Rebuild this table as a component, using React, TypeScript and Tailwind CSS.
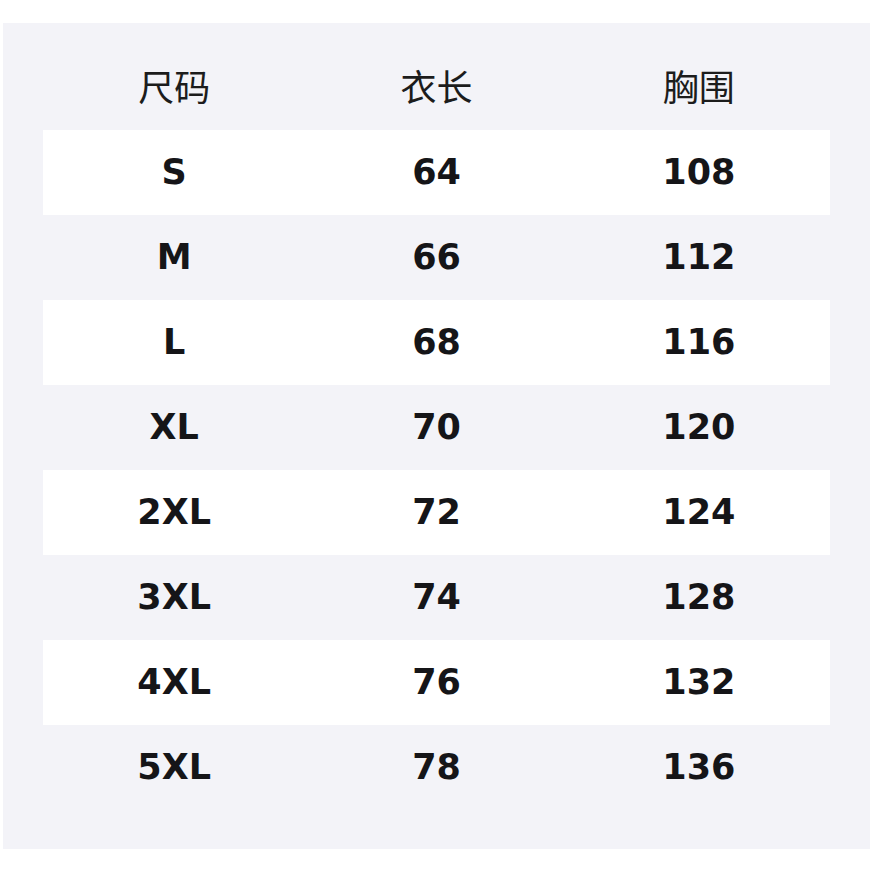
const rows = [
  ['S', '64', '108'],
  ['M', '66', '112'],
  ['L', '68', '116'],
  ['XL', '70', '120'],
  ['2XL', '72', '124'],
  ['3XL', '74', '128'],
  ['4XL', '76', '132'],
  ['5XL', '78', '136'],
]

export default function App() {
  return (
    <div className="w-[874px] h-[874px] bg-white pt-[23px] pl-[3px]">
      <div className="w-[867px] h-[826px] bg-[#f3f3f8] px-[40px] pt-[22px]">
        <div
          className="grid grid-cols-3 h-[85px] pb-[6px] items-center text-center text-[36px] text-[#1c1c1c]"
          style={{ fontFamily: '"Noto Sans CJK SC", "Noto Sans", sans-serif' }}
        >
          <span>尺码</span>
          <span>衣长</span>
          <span>胸围</span>
        </div>
        {rows.map((r, i) => (
          <div
            key={r[0]}
            className={`grid grid-cols-3 h-[85px] items-center text-center text-[35px] font-bold text-[#151518] ${
              i % 2 === 0 ? 'bg-white' : ''
            }`}
            style={{ fontFamily: '"DejaVu Sans", sans-serif' }}
          >
            {r.map((c, j) => (
              <span key={j}>{c}</span>
            ))}
          </div>
        ))}
      </div>
    </div>
  )
}
